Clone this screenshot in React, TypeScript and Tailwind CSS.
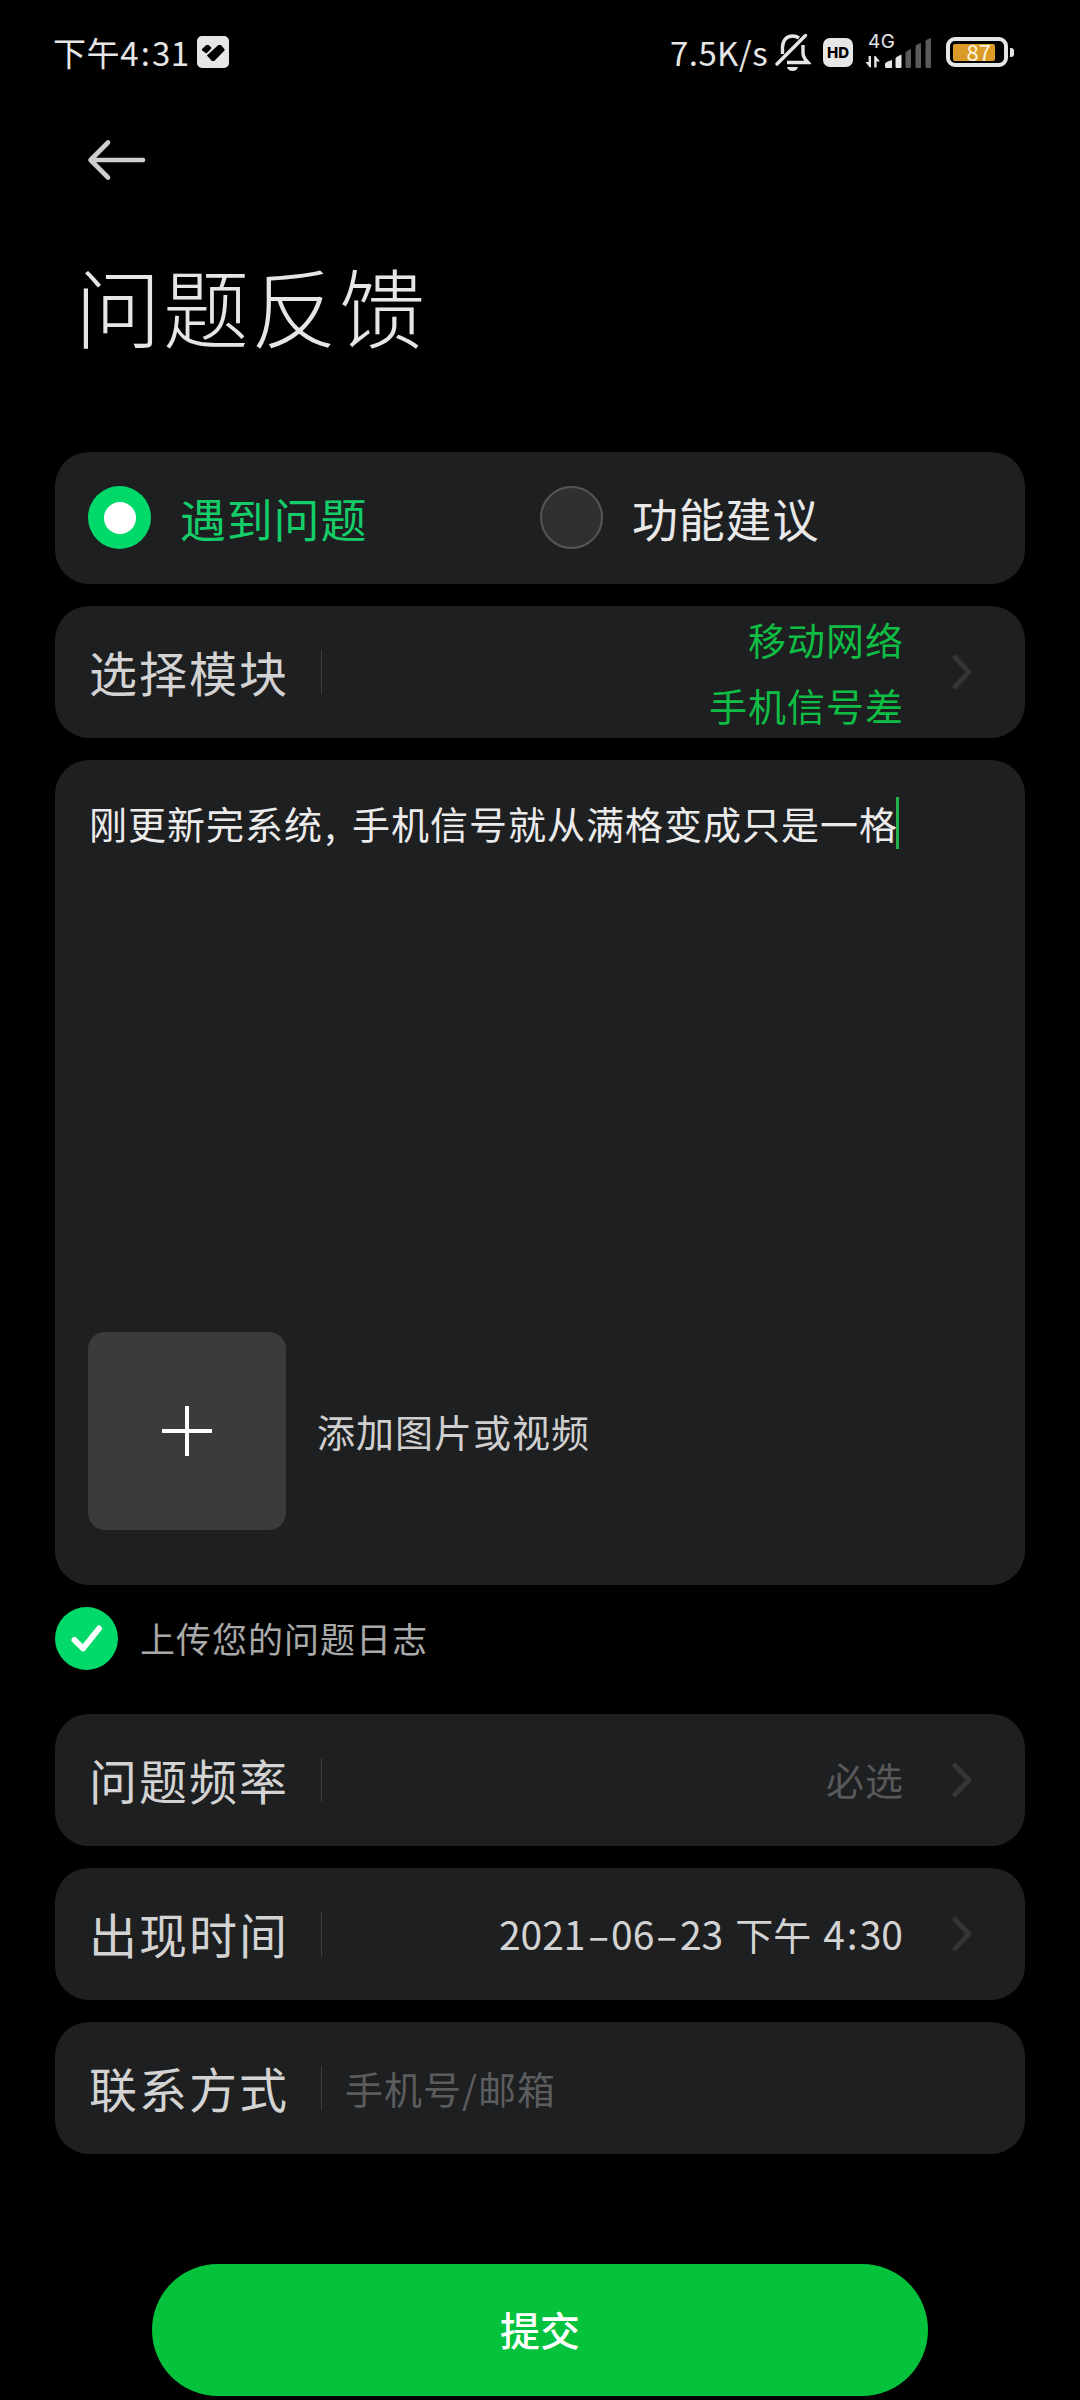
import React, { useState } from "react"

interface RadioProps {
  label: string
  checked: boolean
  onSelect: () => void
}

interface RowProps {
  label: string
  arrow?: boolean
  children: React.ReactNode
}

const BackIcon = () => (
  <svg width="60" height="42" viewBox="0 0 60 42" fill="none">
    <path
      d="M21 3.500L3.500 21L21 38.500M4 21H56"
      stroke="#cfcfcf"
      strokeWidth="4.6"
      strokeLinecap="round"
      strokeLinejoin="round"
    />
  </svg>
)

const Chevron = () => (
  <svg width="20" height="36" viewBox="0 0 20 36" fill="none" className="ml-[50px] mr-[53px]">
    <path
      d="M3 3.500L17 18L3 32.500"
      stroke="#343537"
      strokeWidth="5"
      strokeLinecap="round"
      strokeLinejoin="round"
    />
  </svg>
)

const AppBadge = () => (
  <svg width="32" height="32" viewBox="0 0 32 32">
    <rect width="32" height="32" rx="5" fill="#e6e6e6" />
    <path
      d="M9.300 9h2.400l3 3-5.200 5.600L5 14.500v-1.500L9.300 9zM21.300 9h2.600l3.600 4v1.600L17.200 25h-2.300l-5-5.400L21.300 9z"
      fill="#000"
    />
  </svg>
)

const MuteIcon = () => (
  <svg width="36" height="39" viewBox="0 0 36 39" fill="none" className="ml-[7px]">
    <path
      d="M7.500 21V14.500C7.500 7.500 11.500 3 17.500 3C20 3 22 3.600 24 5M28 12V20C28 24 30 26.500 33 29.500H12"
      stroke="#e6e6e6"
      strokeWidth="3.4"
    />
    <path d="M2 31L30.500 2.500" stroke="#e6e6e6" strokeWidth="3.4" strokeLinecap="round" />
    <path d="M12 34h11c-.6 2.600-2.800 4-5.500 4s-4.900-1.400-5.500-4z" fill="#e6e6e6" />
  </svg>
)

const SignalIcon = () => (
  <svg width="68" height="36" viewBox="0 0 68 36">
    <g fill="#e6e6e6">
      <path d="M3.600 22H6V33.500H4.800L0.500 28H3.600zM9.200 33.500V22H10.500L15 27.500H11.600V33.500z" />
      <path d="M20 30Q20 28 27 26V34H21.500Q20 34 20 32.500z" />
      <path d="M30.500 24.500Q30.500 23 36.500 20.500V33Q36.500 34 35.500 34H32Q30.500 34 30.500 32.500z" />
    </g>
    <g fill="#5a5a5a">
      <path d="M40.500 18.500Q41 17 46 15V32.500Q46 34 45 34H42Q40.500 34 40.500 32.500z" />
      <path d="M50.500 12Q51 10.500 56 9V32.500Q56 34 55 34H52Q50.500 34 50.500 32.500z" />
      <path d="M60.500 7Q61 5.500 66 4V32.500Q66 34 65 34H62Q60.500 34 60.500 32.500z" />
    </g>
  </svg>
)

const StatusBar: React.FC = () => (
  <div className="flex h-[104px] items-center pl-[53px] pr-[66px] text-[#e6e6e6]">
    <span className="w-[144px] whitespace-nowrap text-[33px] leading-none tracking-[0.6px]">
      下午4<span className="mx-[1.500px]">:</span>31
    </span>
    <AppBadge />
    <span className="ml-auto text-[33px] leading-none tracking-[0.4px]">7.5K/s</span>
    <MuteIcon />
    <div className="ml-[12px] flex h-[29px] w-[30px] items-center justify-center rounded-[7px] bg-[#e6e6e6] font-['Inter',sans-serif] text-[15px] font-extrabold leading-none text-black">
      HD
    </div>
    <div className="relative ml-[12px]">
      <SignalIcon />
      <span className="absolute -top-[2px] left-[3px] font-['Inter',sans-serif] text-[19px] leading-none tracking-[0.5px]">
        4G
      </span>
    </div>
    <div className="ml-[13px] flex h-[30px] w-[62px] items-center rounded-[9px] border-4 border-[#e6e6e6] px-[3px]">
      <div className="flex h-[17px] w-[42px] items-center justify-end rounded-[2px] bg-[#dc9a26] pb-[2px] pr-[4px] text-[22px] leading-none text-[#fff6e0]">
        87
      </div>
    </div>
    <div className="ml-[2px] h-[9px] w-[4px] rounded-r-[3px] bg-[#e6e6e6]" />
  </div>
)

const Radio: React.FC<RadioProps> = ({ label, checked, onSelect }) => (
  <button
    type="button"
    className="flex w-[452px] items-center"
    onClick={onSelect}
  >
    {checked ? (
      <span className="flex size-[63px] items-center justify-center rounded-full bg-[#02d96b]">
        <span className="size-[32px] rounded-full bg-white" />
      </span>
    ) : (
      <span className="size-[63px] rounded-full border-2 border-[#545557] bg-[#2f3032]" />
    )}
    <span
      className={
        checked
          ? "ml-[29px] pb-px text-[46px] tracking-[0.8px] text-[#14cd69]"
          : "ml-[29px] pb-px text-[46px] tracking-[0.8px] text-[#e9e9e9]"
      }
    >
      {label}
    </span>
  </button>
)

const Row: React.FC<RowProps> = ({ label, arrow = true, children }) => (
  <div className="flex h-[132px] items-center rounded-[34px] bg-[#1e1f21]">
    <span className="w-[266px] pb-[3px] pl-[34px] text-[48px] tracking-[2px] text-[#d3d3d3]">
      {label}
    </span>
    <span className="h-[44px] w-px bg-[#3e3f41]" />
    <div className="flex-1">{children}</div>
    {arrow && <Chevron />}
  </div>
)

const App: React.FC = () => {
  const [type, setType] = useState("problem")
  const [uploadLog, setUploadLog] = useState(true)

  return (
    <div className="h-[2400px] w-[1080px] overflow-hidden bg-black font-['Noto_Sans_CJK_SC',sans-serif]">
      <StatusBar />

      <header className="pl-[87px] pt-[35px]">
        <button type="button" className="block">
          <BackIcon />
        </button>
      </header>
      <h1 className="mt-[62px] h-[209px] pl-[75px] text-[86px] font-light leading-[124px] tracking-[2px] text-[#e6e6e6]">
        问题反馈
      </h1>

      <main className="flex flex-col gap-[22px] px-[55px]">
        <div className="flex h-[132px] items-center rounded-[34px] bg-[#1e1f21] pb-px pl-[33px]">
          <Radio
            label="遇到问题"
            checked={type === "problem"}
            onSelect={() => setType("problem")}
          />
          <Radio
            label="功能建议"
            checked={type === "suggestion"}
            onSelect={() => setType("suggestion")}
          />
        </div>

        <Row label="选择模块">
          <p className="-mr-[2px] text-right text-[38px] leading-[66px] tracking-[1px] text-[#10bd44]">
            移动网络
            <br />
            手机信号差
          </p>
        </Row>

        <div className="flex h-[825px] flex-col justify-between rounded-[34px] bg-[#1e1f21] pb-[55px] pl-[33px] pt-[37px]">
          <div className="flex h-[52px] items-center whitespace-nowrap pl-px text-[38px] tracking-[1px] text-[#ebebeb]">
            <span className="pb-[2px]">刚更新完系统</span>
            <span className="w-[29px] pb-[2px] pl-[2px]">,</span>
            <span className="pb-[2px]">手机信号就从满格变成只是一格</span>
            <span className="-ml-[2px] h-[52px] w-[3px] bg-[#22b14c]" />
          </div>
          <div className="flex items-center">
            <button
              type="button"
              className="flex size-[198px] items-center justify-center rounded-[17px] bg-[#3b3b3d]"
            >
              <svg width="50" height="50" viewBox="0 0 50 50">
                <path d="M25 0V50M0 25H50" stroke="#fff" strokeWidth="4" />
              </svg>
            </button>
            <span className="ml-[31px] pb-[2px] text-[38px] tracking-[1px] text-[#cfcfcf]">
              添加图片或视频
            </span>
          </div>
        </div>

        <button
          type="button"
          className="mb-[22px] flex h-[63px] items-center"
          onClick={() => setUploadLog(!uploadLog)}
        >
          <span
            className={
              uploadLog
                ? "flex size-[63px] items-center justify-center rounded-full bg-[#02d96b]"
                : "flex size-[63px] rounded-full bg-[#2f3032]"
            }
          >
            {uploadLog && (
              <svg width="63" height="63" viewBox="0 0 63 63" fill="none">
                <path
                  d="M19.500 33L28 41.500L44 21.500"
                  stroke="#fff"
                  strokeWidth="6"
                  strokeLinecap="round"
                  strokeLinejoin="round"
                />
              </svg>
            )}
          </span>
          <span className="ml-[22px] text-[35px] tracking-[1px] text-[#a9a9a9]">
            上传您的问题日志
          </span>
        </button>

        <Row label="问题频率">
          <p className="-mr-[2px] pb-[3px] text-right text-[38px] tracking-[1px] text-[#58595b]">
            必选
          </p>
        </Row>
        <Row label="出现时间">
          <p className="-mr-px pb-[2px] text-right text-[39px] text-[#d3d3d3]">
            2021
            <span className="mx-[6px] inline-block scale-x-[1.7]">-</span>
            06
            <span className="mx-[6px] inline-block scale-x-[1.7]">-</span>
            23<span className="mx-[12px] text-[38px]">下午</span>4
            <span className="mx-[2px]">:</span>30
          </p>
        </Row>
        <Row label="联系方式" arrow={false}>
          <p className="pb-[2px] pl-[23px] text-[38px] tracking-[1px] text-[#5b5c5e]">
            手机号/邮箱
          </p>
        </Row>
      </main>

      <button
        type="button"
        className="mx-auto mt-[110px] flex h-[132px] w-[776px] items-center justify-center rounded-full bg-[#04c23c] pb-[2px] text-[40px] font-medium text-white"
      >
        提交
      </button>
    </div>
  )
}

export default App
